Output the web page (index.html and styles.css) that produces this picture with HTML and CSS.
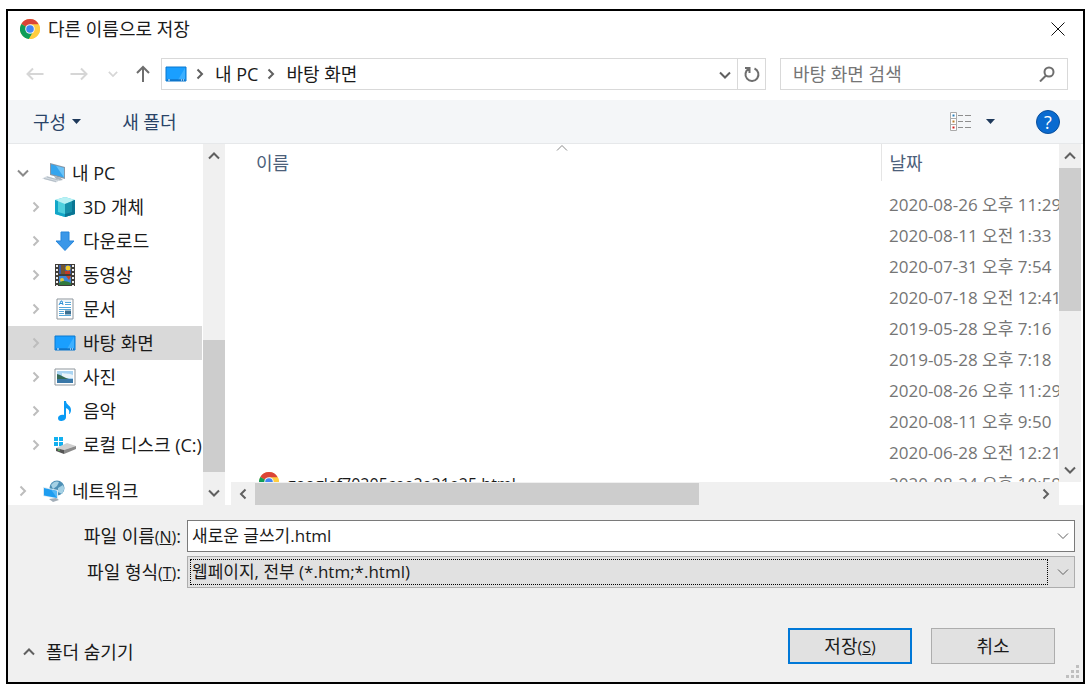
FILE: index.html
```html
<!DOCTYPE html>
<html lang="ko">
<head>
  <meta charset="UTF-8">
  <title>다른 이름으로 저장</title>
  <link rel="stylesheet" href="styles.css">
</head>
<body>

  <!-- 아이콘 모음 -->
  <svg class="sprite" aria-hidden="true">
    <symbol id="chrome" viewBox="0 0 20 20">
      <circle cx="10" cy="10" r="10" fill="#fc4"/>
      <path d="M10 10 1.3 5A10 10 0 0 1 18.7 5.3z" fill="#db4437"/>
      <path d="M1.3 5A10 10 0 0 0 9 20l4.2-7.5-3.2-2.5z" fill="#0f9d58"/>
      <path d="M10 5.3h8.8A10 10 0 0 1 9 20l5-8z" fill="#ffcd40"/>
      <circle cx="10" cy="10" r="4.8" fill="#f1f1f1"/>
      <circle cx="10" cy="10" r="3.8" fill="#4285f4"/>
    </symbol>
    <symbol id="right" viewBox="0 0 12 12"><path d="M3.5 1.5 8 6l-4.500 4.500"/></symbol>
    <symbol id="down" viewBox="0 0 12 12"><path d="M1 3.500 6 8.500l5-5"/></symbol>
    <symbol id="up" viewBox="0 0 12 12"><path d="M1 8.500 6 3.500l5 5"/></symbol>
    <symbol id="left" viewBox="0 0 12 12"><path d="M8.500 1.500 4 6l4.500 4.500"/></symbol>
    <symbol id="desktop" viewBox="0 0 22 16">
      <path d="M1 1h20v14H1z" fill="#1a9fff" stroke="#0b78cf"/>
      <path d="M13 14 20 2v12z" fill="#3db0ff"/>
      <path d="M2 14h18" stroke="#0a5fae"/>
      <path d="M3 14h2M16 14h1M18 14h1" stroke="#fff"/>
    </symbol>
    <symbol id="pc" viewBox="0 0 24 22">
      <path d="M8 1 23 5v12L8 13z" fill="#8a98a6"/>
      <path d="M9 2.200 22 6v9.500L9 12z" fill="#35a5ee"/>
      <path d="M14 3.700 22 6v9.500z" fill="#6cc3f7"/>
      <path d="M12 14l6 1.500 3 2.500-6 1z" fill="#a9b4bd"/>
      <path d="M0 16.500 5 14l13 4-4 2.500z" fill="#d5dce2"/>
      <path d="M2 16.500l12 3M5 15l11 3" stroke="#b3bdc6"/>
    </symbol>
    <symbol id="cube" viewBox="0 0 22 22">
      <path d="M1 4 11 1l10 3v14l-10 3-10-3z" fill="#4ed0de"/>
      <path d="M1 4 11 1l10 3-10 4z" fill="#b9f1f4"/>
      <path d="M1 4l3 1v11l7 2v3L1 18z" fill="#12a6c8"/>
      <path d="M21 4 11 8v13l10-3z" fill="#1590aa"/>
      <path d="M21 4l-3 1v11l-7 2v3l10-3z" fill="#0a7593"/>
    </symbol>
    <symbol id="download" viewBox="0 0 22 22"><path d="M7 2h8v9h5l-9 9.500L2 11h5z" fill="#3a97e8" stroke="#2585da"/></symbol>
    <symbol id="video" viewBox="0 0 22 22">
      <path d="M1 0h20v22H1z" fill="#3f3d38"/>
      <path d="M5 1h12v9H5z" fill="#3a5da8"/>
      <path d="M5 12h12v9H5z" fill="#3c86d8"/>
      <path d="M7 1h4v9H7z" fill="#74552f"/>
      <circle cx="14" cy="4" r="2.500" fill="#f2cd28"/>
      <path d="M11 7h5v3h-5z" fill="#c33a27"/>
      <path d="M12 12h5l-2 4z" fill="#c6432b"/>
      <circle cx="8" cy="16" r="2" fill="#e7c63a"/>
      <path d="M5 19c4-3 7-2 12 0v2H5z" fill="#327a3c"/>
      <path d="M3 1v21M19 1v21" stroke="#eee" stroke-width="2" stroke-dasharray="2 2"/>
    </symbol>
    <symbol id="document" viewBox="0 0 22 22">
      <path d="M3 1h16v20H3z" fill="#fff" stroke="#8c959c"/>
      <path d="M5 3h12" stroke="#d4e6f2"/>
      <path d="M5 7l2-4h1l1 4M6 5.500h3" fill="none" stroke="#2b8fd6"/>
      <path d="M11 4.500h6M11 6.500h6M5 9.500h12M5 11.500h12M5 13.500h5M5 15.500h5M5 17.500h12" stroke="#55a7da"/>
      <path d="M11 12.500h6v4h-6z" fill="#3b6f91"/>
    </symbol>
    <symbol id="picture" viewBox="0 0 22 18">
      <path d="M1 1h20v16H1z" fill="#fff" stroke="#8f979d"/>
      <path d="M3 3h16v12H3z" fill="#a9d4f2"/>
      <path d="M8 5c4 1 7 0 11 2v3H8z" fill="#eaf4fa"/>
      <path d="M3 6c4 1 8 4 12 5H3z" fill="#356a55"/>
      <path d="M3 11h16v4H3z" fill="#3a78a8"/>
    </symbol>
    <symbol id="music" viewBox="0 0 22 22">
      <path d="M10 1h2c0 4 5 4 5 9 0 2-1 4-2 4 1-4-1-5-3-6v9c0 3-3 4-5 4s-3-1-3-3 3-4 6-3z" fill="#0a9bf5"/>
    </symbol>
    <symbol id="disk" viewBox="0 0 22 20">
      <path d="M0 2h4v4H0zM5 2h4v4H5zM0 7h4v4H0zM5 7h4v4H5z" fill="#12b0ef"/>
      <path d="M2 13 13 8l9 3-12 4z" fill="#cfcfcf"/>
      <path d="M2 13l8 2v4l-8-3z" fill="#555"/>
      <path d="M10 15l12-4v3l-12 5z" fill="#8a8a8a"/>
      <path d="M4 15h2" stroke="#60e060"/>
    </symbol>
    <symbol id="network" viewBox="0 0 22 22">
      <circle cx="14" cy="8" r="7.500" fill="#4d8fb5"/>
      <path d="M8 5c3-4 6-4 8-3l-2 4-4 3zM15 8l5-3c2 3 1 6-1 9l-4-2z" fill="#a5d1e5"/>
      <path d="M0 7l15 3v9L0 16z" fill="#d9e8f2"/>
      <path d="M1 8l13 3v7L1 15.500z" fill="#1f9df0"/>
      <path d="M8 9.600l6 1.400v7z" fill="#53b7f6"/>
      <path d="M6 19l7-1 3 2-6 2z" fill="#a3aeb8"/>
    </symbol>
  </svg>

  <main class="dialog">
    <header class="titlebar">
      <svg class="icon-20"><use href="#chrome"/></svg>
      <h1>다른 이름으로 저장</h1>
      <button class="close" type="button" aria-label="닫기">
        <svg viewBox="0 0 14 14"><path d="M0.500 0.500l13 13M13.500 0.500l-13 13"/></svg>
      </button>
    </header>

    <!-- 주소 표시줄 -->
    <div class="nav">
      <div class="nav-buttons">
        <button class="dim" type="button" aria-label="뒤로"><svg class="arrow" viewBox="0 0 18 16"><path d="M17.500 8H1.500M7 2.500 1.500 8 7 13.500"/></svg></button>
        <button class="dim" type="button" aria-label="앞으로"><svg class="arrow" viewBox="0 0 18 16"><path d="M.5 8h16M11 2.500 16.500 8 11 13.500"/></svg></button>
        <button class="dim recent" type="button" aria-label="최근 위치"><svg class="chev-s"><use href="#down"/></svg></button>
        <button class="go-up" type="button" aria-label="위로"><svg class="arrow" viewBox="0 0 18 18"><path d="M9 17V2M3 8l6-6 6 6"/></svg></button>
      </div>
      <div class="address">
        <svg class="icon-desk"><use href="#desktop"/></svg>
        <svg class="chev"><use href="#right"/></svg>
        <a href="#">내 PC</a>
        <svg class="chev"><use href="#right"/></svg>
        <a href="#">바탕 화면</a>
        <button class="history" type="button" aria-label="이전 위치"><svg class="chev"><use href="#down"/></svg></button>
        <button class="refresh" type="button" aria-label="새로 고침">
          <svg viewBox="0 0 18 18"><path d="M11.500 3.500a6.500 6.500 0 1 1-5.500.200M2 3h4.500v5"/></svg>
        </button>
      </div>
      <div class="search">
        <input type="text" placeholder="바탕 화면 검색" aria-label="바탕 화면 검색">
        <svg viewBox="0 0 16 16"><circle cx="10" cy="6" r="4.500"/><path d="M7 9.500 1 15.500"/></svg>
      </div>
    </div>

    <div class="toolbar">
      <button type="button">구성 <svg class="tri" viewBox="0 0 9 5"><path d="M0 0h9L4.500 5z"/></svg></button>
      <button type="button">새 폴더</button>
      <button class="view" type="button" aria-label="보기">
        <svg class="view-icon" viewBox="0 0 21 19">
          <path d="M.5.500h6v6h-6zM.5 6.500h6v6h-6zM.5 12.500h6v6h-6z" fill="#fff" stroke="#aaa"/>
          <path d="M8 3.500h5M15 3.500h6M8 9.500h5M15 9.500h6M8 15.500h5M15 15.500h6" stroke="#8e8e8e"/>
          <path d="M2.500 2.500h2v2h-2z" fill="#2a7fb8"/>
          <path d="M2.500 8.500h2v2h-2z" fill="#b87d2a"/>
          <path d="M2.500 14.500h2v2h-2z" fill="#d3201f"/>
        </svg>
        <svg class="tri" viewBox="0 0 9 5"><path d="M0 0h9L4.500 5z"/></svg>
      </button>
      <button class="help" type="button" aria-label="도움말">?</button>
    </div>

    <div class="panes">
      <!-- 폴더 트리 -->
      <nav class="tree">
        <a class="root" href="#"><svg class="chev open"><use href="#down"/></svg><svg class="icon-24"><use href="#pc"/></svg>내 PC</a>
        <a href="#"><svg class="chev"><use href="#right"/></svg><svg class="icon-22"><use href="#cube"/></svg>3D 개체</a>
        <a href="#"><svg class="chev"><use href="#right"/></svg><svg class="icon-22"><use href="#download"/></svg>다운로드</a>
        <a href="#"><svg class="chev"><use href="#right"/></svg><svg class="icon-22"><use href="#video"/></svg>동영상</a>
        <a href="#"><svg class="chev"><use href="#right"/></svg><svg class="icon-22"><use href="#document"/></svg>문서</a>
        <a class="selected" href="#"><svg class="chev"><use href="#right"/></svg><svg class="icon-22"><use href="#desktop"/></svg>바탕 화면</a>
        <a href="#"><svg class="chev"><use href="#right"/></svg><svg class="icon-22"><use href="#picture"/></svg>사진</a>
        <a href="#"><svg class="chev"><use href="#right"/></svg><svg class="icon-22"><use href="#music"/></svg>음악</a>
        <a href="#"><svg class="chev"><use href="#right"/></svg><svg class="icon-22"><use href="#disk"/></svg>로컬 디스크 (C:)</a>
        <a class="root network" href="#"><svg class="chev"><use href="#right"/></svg><svg class="icon-24"><use href="#network"/></svg>네트워크</a>
      </nav>
      <div class="vscroll">
        <svg class="chev"><use href="#up"/></svg>
        <div class="track track-low"><div class="thumb"></div></div>
        <svg class="chev"><use href="#down"/></svg>
      </div>

      <!-- 파일 목록 -->
      <section class="files">
        <div class="list">
          <table>
            <thead>
              <tr>
                <th>이름<svg class="sort"><use href="#up"/></svg></th>
                <th class="date">날짜</th>
              </tr>
            </thead>
            <tbody>
              <tr><td></td><td>2020-08-26 오후 11:29</td></tr>
              <tr><td></td><td>2020-08-11 오전 1:33</td></tr>
              <tr><td></td><td>2020-07-31 오후 7:54</td></tr>
              <tr><td></td><td>2020-07-18 오전 12:41</td></tr>
              <tr><td></td><td>2019-05-28 오후 7:16</td></tr>
              <tr><td></td><td>2019-05-28 오후 7:18</td></tr>
              <tr><td></td><td>2020-08-26 오후 11:29</td></tr>
              <tr><td></td><td>2020-08-11 오후 9:50</td></tr>
              <tr><td></td><td>2020-06-28 오전 12:21</td></tr>
              <tr><td class="file"><svg class="icon-20"><use href="#chrome"/></svg>googlef70205cee2e21e25.html</td><td>2020-08-24 오후 10:59</td></tr>
            </tbody>
          </table>
        </div>
        <div class="vscroll">
          <svg class="chev"><use href="#up"/></svg>
          <div class="track"><div class="thumb"></div></div>
          <svg class="chev"><use href="#down"/></svg>
        </div>
        <div class="hscroll">
          <svg class="chev"><use href="#left"/></svg>
          <div class="track"><div class="thumb"></div></div>
          <svg class="chev"><use href="#right"/></svg>
        </div>
      </section>
    </div>

    <form class="footer">
      <div class="fields">
        <label for="filename">파일 이름<small>(<u>N</u>)</small>:</label>
        <div class="combo">
          <input type="text" id="filename" value="새로운 글쓰기.html">
          <svg class="chev"><use href="#down"/></svg>
        </div>
        <label for="filetype">파일 형식<small>(<u>T</u>)</small>:</label>
        <div class="combo combo-type">
          <select id="filetype">
            <option>웹페이지, 전부 (*.htm;*.html)</option>
          </select>
          <svg class="chev"><use href="#down"/></svg>
        </div>
      </div>
      <div class="actions">
        <button class="hide" type="button"><svg class="chev"><use href="#up"/></svg>폴더 숨기기</button>
        <button class="btn primary" type="submit">저장<small>(<u>S</u>)</small></button>
        <button class="btn" type="button">취소</button>
      </div>
      <svg class="grip" viewBox="0 0 13 13"><path d="M10 0h3v3h-3zM5 5h3v3H5zM10 5h3v3h-3zM0 10h3v3H0zM5 10h3v3H5zM10 10h3v3h-3z"/></svg>
    </form>
  </main>

</body>
</html>
```
FILE: styles.css
```css
* {
  box-sizing: border-box;
}
body {
  margin: 9px 6px 8px;
  background: #fff;
  color: #1a1a1a;
  font-family: "Open Sans", "Noto Sans CJK KR", sans-serif;
  font-size: 18px;
  line-height: 24px;
}
button, input, select {
  font: inherit;
  color: inherit;
  margin: 0;
  padding: 0;
  border: 0;
  background: none;
}
input, select {
  outline: 0;
  min-width: 0;
}
a {
  color: inherit;
  text-decoration: none;
}
svg {
  flex: none;
}
small {
  font-size: 16px;
}
.sprite {
  display: none;
}
.dialog {
  border: 2px solid #000;
}

/* 아이콘 크기 */
.icon-20 { width: 20px; height: 20px; }
.icon-22 { width: 22px; height: 22px; }
.icon-24 { width: 24px; height: 22px; }
.icon-desk { width: 22px; height: 16px; }
.chev, .chev-s {
  width: 12px;
  height: 12px;
  fill: none;
  stroke: #606060;
  stroke-width: 2;
}
.chev-s {
  width: 10px;
  height: 10px;
}
.tri {
  width: 9px;
  height: 5px;
  fill: #1e395b;
}

.titlebar {
  display: flex;
  align-items: center;
  height: 35px;
  padding: 0 18px 0 12px;
}
.titlebar h1 {
  flex: 1;
  margin: 0 0 0 8px;
  font-size: 18px;
  font-weight: normal;
}
.close svg {
  display: block;
  width: 14px;
  height: 14px;
  stroke: #111;
}

.nav {
  display: flex;
  align-items: center;
  padding: 12px 15px 10px 18px;
}
.nav-buttons {
  display: flex;
  align-items: center;
  gap: 26px;
  width: 135px;
}
.nav-buttons svg {
  display: block;
  fill: none;
  stroke: #6e6e6e;
  stroke-width: 2;
}
.nav-buttons .dim svg {
  stroke: #d6d6d6;
}
.arrow {
  width: 18px;
  height: 18px;
}
.nav-buttons .recent {
  margin: 0 -10px 0 -6px;
}
.address {
  display: flex;
  align-items: center;
  flex: 1;
  height: 32px;
  padding-left: 3px;
  border: 1px solid #d9d9d9;
}
.address > .chev {
  margin: 0 9px 0 7px;
}
.history {
  margin-left: auto;
  padding: 0 6px;
}
.refresh {
  align-self: stretch;
  width: 28px;
  border-left: 1px solid #d9d9d9;
}
.refresh svg {
  display: block;
  width: 18px;
  height: 18px;
  margin: 0 auto;
  fill: none;
  stroke: #6e6e6e;
  stroke-width: 2;
}
.search {
  display: flex;
  align-items: center;
  width: 288px;
  height: 32px;
  margin-left: 14px;
  padding: 0 12px;
  border: 1px solid #d9d9d9;
}
.search input {
  flex: 1;
}
.search input::placeholder {
  color: #757575;
}
.search svg {
  width: 16px;
  height: 16px;
  fill: none;
  stroke: #6e6e6e;
  stroke-width: 2;
}

.toolbar {
  display: flex;
  align-items: center;
  gap: 41px;
  height: 44px;
  padding: 0 23px 0 25px;
  border-bottom: 1px solid #e6e8ea;
  background: #f4f6f8;
  color: #2a4468;
}
.toolbar button {
  display: flex;
  align-items: center;
  gap: 6px;
}
.toolbar .view {
  margin-left: auto;
  gap: 15px;
}
.view-icon {
  width: 21px;
  height: 19px;
}
.toolbar .help {
  justify-content: center;
  width: 24px;
  height: 24px;
  border: 1px solid #0a4f9c;
  border-radius: 50%;
  background: #0a6bd0;
  color: #fff;
}

.panes {
  display: flex;
  height: 361px;
  background: #fff;
}
.tree {
  width: 194px;
  padding-top: 12px;
  overflow: hidden;
}
.tree a {
  display: flex;
  align-items: center;
  gap: 7px;
  height: 34px;
  padding-left: 22px;
  white-space: nowrap;
}
.tree a .chev {
  margin-right: 5px;
  stroke: #bdbdbd;
}
.tree .root {
  gap: 6px;
  padding-left: 9px;
}
.tree .root .chev {
  margin-right: 7px;
}
.tree .root .open {
  stroke: #8a8a8a;
}
.tree .selected {
  background: #d9d9d9;
}
.tree .network {
  margin-top: 12px;
}

/* 스크롤바 */
.vscroll {
  display: flex;
  flex-direction: column;
  align-items: center;
  width: 22px;
  padding: 6px 0;
  background: #f0f0f0;
}
.panes > .vscroll {
  margin-left: 1px;
}
.vscroll .track {
  flex: 1;
  width: 22px;
  margin: 6px 0;
}
.vscroll .thumb {
  height: 143px;
  background: #cdcdcd;
}
.vscroll .track-low {
  display: flex;
  align-items: flex-end;
  margin-bottom: 15px;
}
.track-low .thumb {
  flex: 1;
  height: 132px;
}
.hscroll {
  display: flex;
  align-items: center;
  padding: 0 7px 0 6px;
  background: #f0f0f0;
}
.hscroll .track {
  flex: 1;
  margin: 0 6px;
}
.hscroll .thumb {
  width: 57%;
  height: 22px;
  background: #cdcdcd;
}

.files {
  display: grid;
  grid-template-columns: 1fr 22px;
  grid-template-rows: 338px 23px;
  flex: 1;
  min-width: 0;
  margin: 0 2px 0 6px;
}
.list {
  overflow: hidden;
}
table {
  width: 100%;
  table-layout: fixed;
  border-collapse: collapse;
}
th {
  position: relative;
  height: 37px;
  padding: 0 0 0 25px;
  color: #4c607a;
  font-weight: normal;
  text-align: left;
}
.date {
  width: 178px;
  padding-left: 8px;
  border-left: 1px solid #e5e5e5;
}
.sort {
  position: absolute;
  top: -2px;
  left: 50%;
  width: 12px;
  height: 12px;
  fill: none;
  stroke: #8a8a8a;
}
td {
  height: 31px;
  padding: 0 0 0 8px;
  overflow: hidden;
  color: #757575;
  font-size: 17px;
  white-space: nowrap;
}
tbody::before {
  content: "";
  display: block;
  height: 8px;
}
td.file {
  padding-left: 28px;
  color: #1a1a1a;
  font-size: 16px;
}
.file svg {
  margin-right: 8px;
  vertical-align: top;
}

.footer {
  position: relative;
  padding: 15px 8px 18px 15px;
  background: #f0f0f0;
}
.fields {
  display: grid;
  grid-template-columns: 158px 1fr;
  gap: 4px 6px;
  align-items: center;
}
.fields label {
  text-align: right;
}
.combo {
  display: flex;
  align-items: center;
  height: 32px;
  padding: 0 5px 0 4px;
  border: 1px solid #7a7a7a;
  background: #fff;
  font-size: 17px;
}
.combo .chev {
  stroke-width: 1;
}
.combo input {
  flex: 1;
}
.combo-type {
  padding-left: 2px;
  border-color: #adadad;
  background: #e1e1e1;
}
.combo select {
  flex: 1;
  height: 26px;
  margin-right: 9px;
  padding-left: 1px;
  border: 1px dotted #000;
  border-radius: 0;
  appearance: none;
}
.actions {
  display: flex;
  align-items: flex-end;
  gap: 19px;
  margin-top: 40px;
  padding-right: 20px;
}
.hide {
  display: flex;
  align-items: center;
  gap: 11px;
  margin-right: auto;
}
.btn {
  width: 124px;
  height: 36px;
  border: 1px solid #adadad;
  background: #e1e1e1;
}
.primary {
  border: 2px solid #0078d7;
}
.grip {
  position: absolute;
  right: 4px;
  bottom: 4px;
  width: 13px;
  height: 13px;
  fill: #bfbfbf;
}
```
